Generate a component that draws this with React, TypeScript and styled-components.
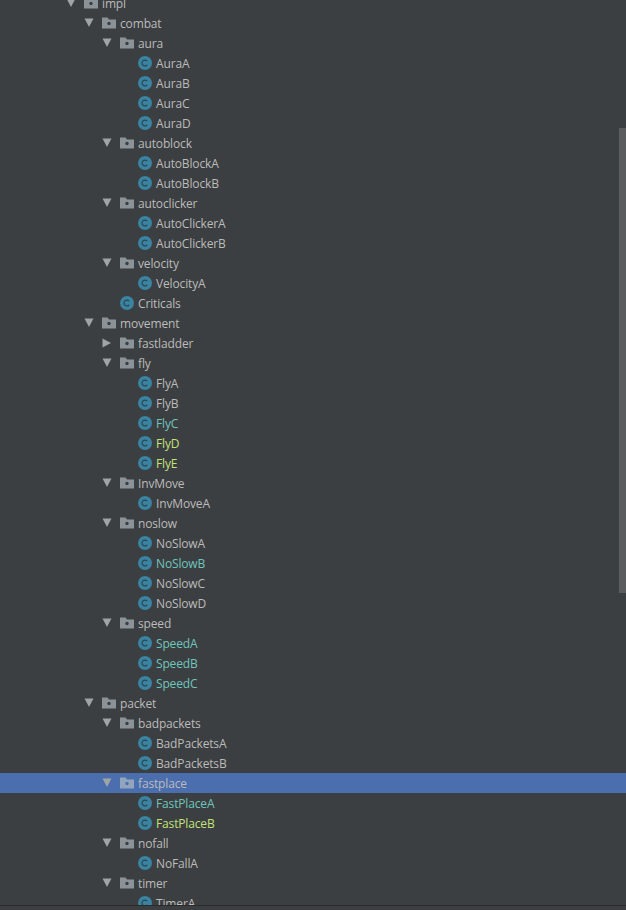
import React from "react";
import styled, { createGlobalStyle } from "styled-components";

const Global = createGlobalStyle`
  html, body { margin: 0; padding: 0; background: #3c3f41; }
`;

const Viewport = styled.div`
  position: relative;
  width: 626px;
  height: 910px;
  overflow: hidden;
  background: #3c3f41;
  font-family: "Open Sans", "Liberation Sans", sans-serif;
  font-size: 12px;
`;

const Tree = styled.div`
  display: flex;
  flex-direction: column;
  margin-top: -7px;
`;

const Row = styled.div<{ $depth: number; $selected?: boolean }>`
  display: flex;
  align-items: center;
  height: 20px;
  flex: none;
  padding-left: ${(p) => 66 + p.$depth * 18}px;
  background: ${(p) => (p.$selected ? "#4b6eaf" : "transparent")};
`;

const ArrowSlot = styled.span`
  width: 18px;
  height: 20px;
  flex: none;
  display: flex;
  align-items: center;
  svg { display: block; }
`;

const IconSlot = styled.span`
  width: 18px;
  height: 20px;
  flex: none;
  display: flex;
  align-items: center;
  svg { display: block; }
`;

const Label = styled.span<{ $tone: string }>`
  color: ${(p) => p.$tone};
  white-space: nowrap;
  line-height: 20px;
  letter-spacing: -0.15px;
  padding-top: 2px;
`;

const Scrollbar = styled.div`
  position: absolute;
  right: 0;
  top: 128px;
  width: 7px;
  height: 465px;
  background: #5a5c5e;
`;

const BottomEdge = styled.div`
  position: absolute;
  left: 0;
  right: 0;
  bottom: 0;
  height: 5px;
  background: #3c3f41;
  border-top: 1px solid #2b2b2b;
  box-sizing: border-box;
`;

const Arrow = ({ open }: { open: boolean }) => (
  <svg width="10" height="10" viewBox="0 0 10 10">
    {open ? <path d="M0.5 0.5H9.5L5 9Z" fill="#a0a4a7" /> : <path d="M0.5 0.5V9.5L9 5Z" fill="#a0a4a7" />}
  </svg>
);

const FolderIcon = ({ selected }: { selected?: boolean }) => (
  <svg width="14" height="12" viewBox="0 0 14 12">
    <path d="M0 0.5H5.5L7 2.5H14V11.5H0Z" fill={selected ? "#93a4bd" : "#8b9398"} />
    <circle cx="7" cy="6.5" r="1.7" fill={selected ? "#4b6eaf" : "#3c3f41"} />
  </svg>
);

const ClassIcon = () => (
  <svg width="14" height="14" viewBox="0 0 14 14">
    <circle cx="7" cy="7" r="7" fill="#3a83a1" />
    <path d="M9.2 5.2A2.9 2.9 0 1 0 9.2 8.8" fill="none" stroke="#2c4450" strokeWidth="1.2" />
  </svg>
);

type Item = { t: "d" | "c"; name: string; depth: number; closed?: boolean; tone?: string; sel?: boolean };

const BASE = "#bbbbbb";
const TEAL = "#6fc5bd";
const LIME = "#c3e27a";

const d = (name: string, depth: number, extra: Partial<Item> = {}): Item => ({ t: "d", name, depth, ...extra });
const c = (name: string, depth: number, tone?: string): Item => ({ t: "c", name, depth, tone });

const items: Item[] = [
  d("impl", 0),
  d("combat", 1),
  d("aura", 2),
  c("AuraA", 3), c("AuraB", 3), c("AuraC", 3), c("AuraD", 3),
  d("autoblock", 2),
  c("AutoBlockA", 3), c("AutoBlockB", 3),
  d("autoclicker", 2),
  c("AutoClickerA", 3), c("AutoClickerB", 3),
  d("velocity", 2),
  c("VelocityA", 3),
  c("Criticals", 2),
  d("movement", 1),
  d("fastladder", 2, { closed: true }),
  d("fly", 2),
  c("FlyA", 3), c("FlyB", 3), c("FlyC", 3, TEAL), c("FlyD", 3, LIME), c("FlyE", 3, LIME),
  d("InvMove", 2),
  c("InvMoveA", 3),
  d("noslow", 2),
  c("NoSlowA", 3), c("NoSlowB", 3, TEAL), c("NoSlowC", 3), c("NoSlowD", 3),
  d("speed", 2),
  c("SpeedA", 3, TEAL), c("SpeedB", 3, TEAL), c("SpeedC", 3, TEAL),
  d("packet", 1),
  d("badpackets", 2),
  c("BadPacketsA", 3), c("BadPacketsB", 3),
  d("fastplace", 2, { sel: true }),
  c("FastPlaceA", 3, TEAL), c("FastPlaceB", 3, LIME),
  d("nofall", 2),
  c("NoFallA", 3),
  d("timer", 2),
  c("TimerA", 3),
];

export default function App() {
  return (
    <Viewport>
      <Global />
      <Tree>
        {items.map((it) => (
          <Row key={it.name} $depth={it.depth} $selected={it.sel}>
            <ArrowSlot>{it.t === "d" && <Arrow open={!it.closed} />}</ArrowSlot>
            <IconSlot>{it.t === "d" ? <FolderIcon selected={it.sel} /> : <ClassIcon />}</IconSlot>
            <Label $tone={it.tone ?? BASE}>{it.name}</Label>
          </Row>
        ))}
      </Tree>
      <Scrollbar />
      <BottomEdge />
    </Viewport>
  );
}
